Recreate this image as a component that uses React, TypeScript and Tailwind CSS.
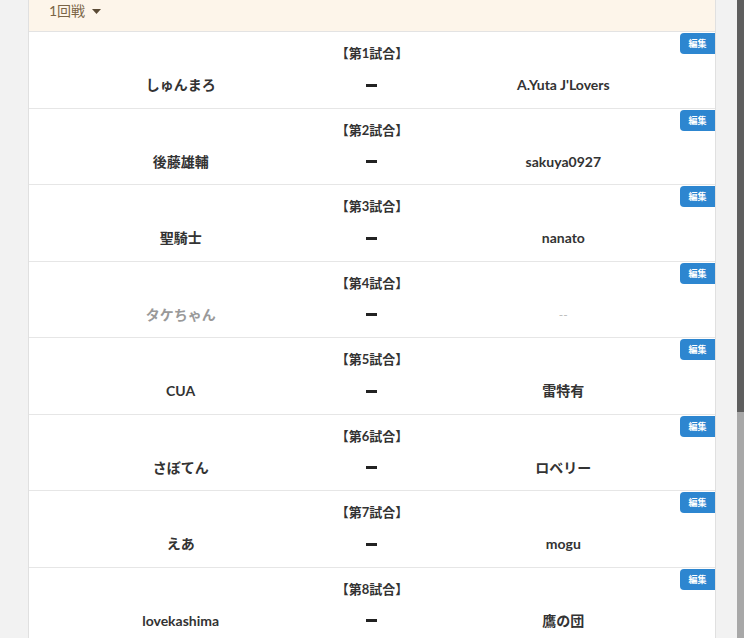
import React from "react";

interface Match {
  no: number;
  left: string;
  right: string;
  pending?: boolean;
}

const matches: Match[] = [
  { no: 1, left: "しゅんまろ", right: "A.Yuta J'Lovers" },
  { no: 2, left: "後藤雄輔", right: "sakuya0927" },
  { no: 3, left: "聖騎士", right: "nanato" },
  { no: 4, left: "タケちゃん", right: "--", pending: true },
  { no: 5, left: "CUA", right: "雷特有" },
  { no: 6, left: "さぼてん", right: "ロベリー" },
  { no: 7, left: "えあ", right: "mogu" },
  { no: 8, left: "lovekashima", right: "鷹の団" },
];

const MatchRow: React.FC<{ match: Match }> = ({ match }) => {
  return (
    <div className="relative h-[76.5px] border-b border-[#e6e6e6] px-[15px]">
      {/* Edit button */}
      <button className="absolute right-0 top-px h-[21px] w-[35px] rounded-l-[4px] bg-[#2d86d0] text-[9px] font-bold leading-[21px] text-white">
        編集
      </button>

      <div className="pt-[12px] text-center text-[13px] font-bold leading-[18px] text-[#333]">
        【第{match.no}試合】
      </div>

      <div className="mt-[13px] grid grid-cols-12 items-center text-[14px] font-bold leading-[20px]">
        <div className={`col-span-5 text-center ${match.pending ? "text-[#999]" : "text-[#333]"}`}>
          {match.left}
        </div>
        <div className="col-span-2 flex justify-center">
          <span className="block h-[3px] w-[11px] bg-[#222]" />
        </div>
        <div
          className={`col-span-5 text-center ${
            match.pending ? "text-[12px] font-normal text-[#bbb]" : "text-[#333]"
          }`}
        >
          {match.right}
        </div>
      </div>
    </div>
  );
};

const App: React.FC = () => {
  return (
    <div
      className="flex h-[638px] w-[750px] overflow-hidden bg-white"
      style={{ fontFamily: "Lato, 'Noto Sans CJK JP', sans-serif" }}
    >
      {/* Main area */}
      <div className="flex-1 bg-[#f2f2f2] pl-[28px] pr-[21px]">
        <div className="border-x border-[#e0e0e0] bg-white">
          {/* Round header */}
          <div className="flex h-[32px] items-start border-b border-[#e3e3e3] bg-[#fdf5ea] pl-[20px] pt-[2px]">
            <span className="text-[14px] leading-[18px] text-[#7a6446]">1回戦</span>
            <svg className="ml-[7px] mt-[7px]" width="9" height="5" viewBox="0 0 9 5">
              <path d="M0 0h9L4.5 5z" fill="#5a4a35" />
            </svg>
          </div>

          {matches.map((m) => (
            <MatchRow key={m.no} match={m} />
          ))}
        </div>
      </div>

      {/* Scrollbar */}
      <div className="flex w-[7px] flex-col">
        <div className="h-[412px] bg-[#5e5e5e]" />
        <div className="flex-1 bg-[#a8a8a8]" />
      </div>
      <div className="w-[6px] bg-white" />
    </div>
  );
};

export default App;
